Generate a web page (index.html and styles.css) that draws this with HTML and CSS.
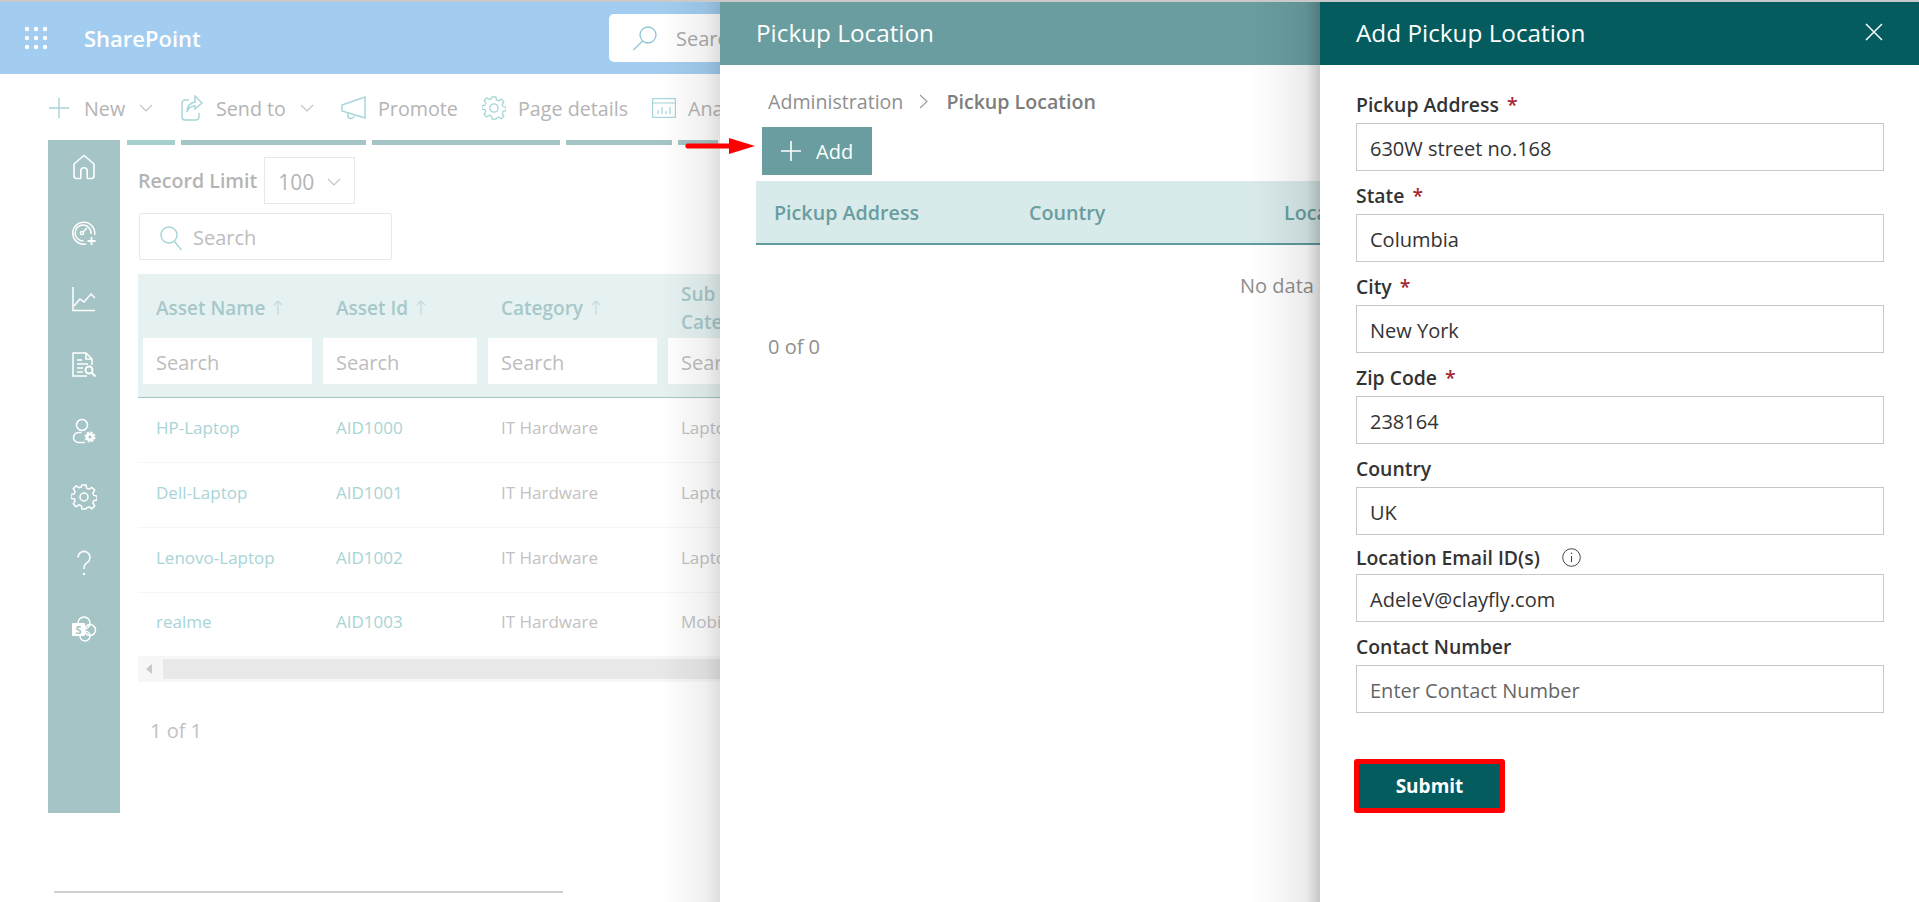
FILE: index.html
```html
<!DOCTYPE html>
<html lang="en">
<head>
  <meta charset="UTF-8">
  <title>Pickup Location</title>
  <link rel="stylesheet" href="styles.css">
</head>
<body>
  <div class="page">
    <header class="suite-bar">
      <svg class="waffle" width="24" height="24" viewBox="0 0 24 24"><g fill="#fff"><circle cx="3" cy="3" r="2.2"/><circle cx="12" cy="3" r="2.2"/><circle cx="21" cy="3" r="2.2"/><circle cx="3" cy="12" r="2.2"/><circle cx="12" cy="12" r="2.2"/><circle cx="21" cy="12" r="2.2"/><circle cx="3" cy="21" r="2.2"/><circle cx="12" cy="21" r="2.2"/><circle cx="21" cy="21" r="2.2"/></g></svg>
      <div class="brand">SharePoint</div>
      <div class="suite-search">
        <svg width="26" height="26" viewBox="0 0 26 26" fill="none" stroke="#8fc3d6" stroke-width="1.3"><circle cx="16" cy="10" r="8"/><path d="M10.5 16 1.5 25"/></svg>
        <span>Search</span>
      </div>
    </header>

    <div class="cmd-bar">
      <div class="cmd cmd-new">
        <svg width="20" height="20" viewBox="0 0 20 20" fill="none" stroke="#a5d5d8" stroke-width="1.4"><path d="M10 0v20M0 10h20"/></svg>
        <span>New</span>
        <svg class="chev" width="14" height="8" viewBox="0 0 14 8" fill="none" stroke="#c4c4c4" stroke-width="1.2"><path d="m1 1 6 6 6-6"/></svg>
      </div>
      <div class="cmd cmd-send">
        <svg width="22" height="26" viewBox="0 0 22 26" fill="none" stroke="#a5d5d8" stroke-width="1.4"><path d="M8 5H4a3 3 0 0 0-3 3v14a3 3 0 0 0 3 3h11a3 3 0 0 0 3-3v-4"/><path d="M14 1l7 7-7 6v-3c-4 0-7 2-8 6 0-6 3-9 8-10z"/></svg>
        <span>Send to</span>
        <svg class="chev" width="14" height="8" viewBox="0 0 14 8" fill="none" stroke="#c4c4c4" stroke-width="1.2"><path d="m1 1 6 6 6-6"/></svg>
      </div>
      <div class="cmd cmd-promote">
        <svg width="25" height="24" viewBox="0 0 25 24" fill="none" stroke="#a5d5d8" stroke-width="1.4"><path d="M24 1v21L1 15V9z"/><path d="M7 17v2a3 3 0 0 0 6 1"/></svg>
        <span>Promote</span>
      </div>
      <div class="cmd cmd-details">
        <svg width="24" height="24" viewBox="0 0 26 26" fill="none" stroke="#a5d5d8" stroke-width="1.4"><path d="M11 1h4l.7 3.300 2.300.9 2.900-1.800 2.800 2.800-1.800 2.900.9 2.300 3.200.6v4l-3.200.7-.9 2.300 1.800 2.900-2.800 2.800-2.900-1.800-2.300.9L15 25h-4l-.7-3.200-2.300-.9-2.900 1.800-2.800-2.800 1.800-2.900-.9-2.300L0 14.500v-4l3.200-.6.900-2.300-1.800-2.900 2.800-2.800L8 3.700l2.300-.9z"/><circle cx="13" cy="13" r="4.500"/></svg>
        <span>Page details</span>
      </div>
      <div class="cmd cmd-analytics">
        <svg width="24" height="20" viewBox="0 0 24 20" fill="none" stroke="#a5d5d8" stroke-width="1.2"><rect x=".6" y=".6" width="22.8" height="18.8"/><path d="M1 5h22M6 16v-4M10 16V9M14 16v-3M18 16V9"/></svg>
        <span>Analytics</span>
      </div>
    </div>

    <div class="app">
      <nav class="side-nav">
        <svg width="26" height="26" viewBox="0 0 26 26" fill="none" stroke="#fff" stroke-width="1.6"><path d="M13 1.500 3 10v12a2.500 2.500 0 0 0 2.500 2.500H9a.8.8 0 0 0 .8-.8V17a3.200 3.200 0 0 1 6.400 0v6.700a.8.8 0 0 0 .8.8h3.500A2.500 2.500 0 0 0 23 22V10z"/></svg>
        <svg width="26" height="26" viewBox="0 0 26 26" fill="none" stroke="#fff" stroke-width="1.5"><path d="M15 24a11 11 0 1 1 8.600-9"/><path d="M12.500 21a8 8 0 1 1 7.500-7"/><circle cx="11" cy="13" r="1.600"/><path d="m12 12 4-4"/><path d="M20.500 17v8M16.500 21h8" stroke-width="1.800"/></svg>
        <svg width="26" height="26" viewBox="0 0 26 26" fill="none" stroke="#fff" stroke-width="1.500"><path d="M2 1v23.500h22"/><path d="m3 20 6-7 4 3 7-8 4 4"/></svg>
        <svg width="26" height="26" viewBox="0 0 26 26" fill="none" stroke="#fff" stroke-width="1.500"><path d="M16 24H2V1h13l6 6v6"/><path d="M15 1v6h6M6 8h5M6 12h11M6 16h6M6 20h6"/><circle cx="18" cy="18" r="3.500" stroke-width="2"/><path d="m20.500 20.500 4 4" stroke-width="2"/></svg>
        <svg width="26" height="26" viewBox="0 0 26 26" fill="none" stroke="#fff" stroke-width="1.500"><circle cx="11" cy="7" r="5.500"/><path d="M14 24.500H7.500a5 5 0 0 1 0-10h3"/><circle cx="19" cy="19" r="4" fill="#fff" stroke="#fff" stroke-width="3" stroke-dasharray="2 1.100"/><circle cx="19" cy="19" r="1.500" fill="#a5c4c5" stroke="none"/></svg>
        <svg width="26" height="26" viewBox="0 0 26 26" fill="none" stroke="#fff" stroke-width="1.500"><path d="M11 1h4l.7 3.300 2.300.9 2.900-1.800 2.800 2.800-1.800 2.900.9 2.300 3.200.6v4l-3.200.7-.9 2.300 1.800 2.900-2.800 2.800-2.900-1.800-2.300.9L15 25h-4l-.7-3.200-2.300-.9-2.900 1.800-2.800-2.800 1.800-2.900-.9-2.300L0 14.500v-4l3.200-.6.900-2.300-1.800-2.900 2.800-2.800L8 3.700l2.300-.9z"/><circle cx="13" cy="13" r="4"/></svg>
        <svg width="26" height="26" viewBox="0 0 26 26" fill="none" stroke="#fff" stroke-width="1.500"><path d="M7 7.500a6 6 0 1 1 9.500 4.800C14 14 13 15 13 19"/><circle cx="13" cy="24" r="1.200" fill="#fff" stroke="none"/></svg>
        <svg width="26" height="26" viewBox="0 0 26 26" fill="none" stroke="#fff" stroke-width="1.500"><circle cx="13" cy="7" r="6"/><circle cx="19" cy="14" r="5.500"/><circle cx="14" cy="20" r="5"/><rect x="1" y="7" width="13" height="13" rx="1" fill="#fff" stroke="none"/><text x="7.500" y="18" class="sp-letter">S</text></svg>
      </nav>

      <main class="content">
        <div class="tabs">
          <i class="tab tab-a"></i><i class="tab tab-b"></i><i class="tab tab-c"></i><i class="tab tab-d"></i><i class="tab tab-e"></i>
        </div>
        <div class="record-limit">
          <span>Record Limit</span>
          <div class="limit-select">100
            <svg width="14" height="8" viewBox="0 0 14 8" fill="none" stroke="#c4c4c4" stroke-width="1.2"><path d="m1 1 6 6 6-6"/></svg>
          </div>
        </div>
        <div class="table-search">
          <svg width="22" height="26" viewBox="0 0 22 26" fill="none" stroke="#a5d5d8" stroke-width="1.4"><circle cx="9" cy="10" r="8"/><path d="m14.500 16.500 7 8.500"/></svg>
          <span>Search</span>
        </div>

        <table class="assets">
          <colgroup><col class="c1"><col class="c2"><col class="c3"><col class="c4"><col class="c5"></colgroup>
          <thead>
            <tr class="head-row">
              <th>Asset Name<svg class="sort" width="10" height="15" viewBox="0 0 10 15" fill="none" stroke="#c3d8d8" stroke-width="1.1"><path d="M5 15V1M1 5l4-4 4 4"/></svg></th>
              <th>Asset Id<svg class="sort" width="10" height="15" viewBox="0 0 10 15" fill="none" stroke="#c3d8d8" stroke-width="1.1"><path d="M5 15V1M1 5l4-4 4 4"/></svg></th>
              <th>Category<svg class="sort" width="10" height="15" viewBox="0 0 10 15" fill="none" stroke="#c3d8d8" stroke-width="1.1"><path d="M5 15V1M1 5l4-4 4 4"/></svg></th>
              <th>Sub<br>Category</th>
              <th></th>
            </tr>
            <tr class="filter-row">
              <th><div class="filter">Search</div></th>
              <th><div class="filter">Search</div></th>
              <th><div class="filter">Search</div></th>
              <th><div class="filter">Search</div></th>
              <th></th>
            </tr>
          </thead>
          <tbody>
            <tr><td class="link">HP-Laptop</td><td class="link">AID1000</td><td>IT Hardware</td><td>Laptop</td><td></td></tr>
            <tr><td class="link">Dell-Laptop</td><td class="link">AID1001</td><td>IT Hardware</td><td>Laptop</td><td></td></tr>
            <tr><td class="link">Lenovo-Laptop</td><td class="link">AID1002</td><td>IT Hardware</td><td>Laptop</td><td></td></tr>
            <tr><td class="link">realme</td><td class="link">AID1003</td><td>IT Hardware</td><td>Mobile</td><td></td></tr>
          </tbody>
        </table>

        <div class="h-scroll">
          <div class="scroll-btn"></div>
          <div class="scroll-thumb"></div>
        </div>
        <div class="pager">1 of 1</div>
      </main>
    </div>

    <div class="foot-line"></div>
  </div>

  <section class="panel panel-list">
    <div class="panel-head">Pickup Location</div>
    <div class="crumbs">
      <span>Administration</span>
      <svg width="9" height="15" viewBox="0 0 9 15" fill="none" stroke="#9a9a9a" stroke-width="1.1"><path d="m1 1 7 6.500L1 14"/></svg>
      <strong>Pickup Location</strong>
    </div>
    <button class="add-btn">
      <svg width="20" height="20" viewBox="0 0 20 20" fill="none" stroke="#fff" stroke-width="1.6"><path d="M10 0v20M0 10h20"/></svg>
      Add
    </button>
    <div class="list-head">
      <span class="lh-address">Pickup Address</span>
      <span class="lh-country">Country</span>
      <span>Location</span>
    </div>
    <div class="no-data">No data</div>
    <div class="list-count">0 of 0</div>
  </section>

  <svg class="arrow" width="70" height="16" viewBox="0 0 70 16"><path d="M2 5.500h42V0l26 8-26 8v-5.500H2a2.700 2.700 0 0 1 0-5z" fill="#f00"/></svg>

  <section class="panel panel-form">
    <div class="panel-head">
      Add Pickup Location
      <svg class="close" width="18" height="18" viewBox="0 0 18 18" fill="none" stroke="#fff" stroke-width="1.5"><path d="m1 1 16 16M17 1 1 17"/></svg>
    </div>
    <form class="form-body">
      <label>Pickup Address <em>*</em></label>
      <div class="input">630W street no.168</div>
      <label>State <em>*</em></label>
      <div class="input">Columbia</div>
      <label>City <em>*</em></label>
      <div class="input">New York</div>
      <label>Zip Code <em>*</em></label>
      <div class="input">238164</div>
      <label>Country</label>
      <div class="input">UK</div>
      <label class="label-tight">Location Email ID(s)
        <svg width="19" height="19" viewBox="0 0 19 19" fill="none" stroke="#444" stroke-width="1"><circle cx="9.500" cy="9.500" r="8.800"/><path d="M9.500 8v6"/><circle cx="9.500" cy="5.300" r=".8" fill="#444" stroke="none"/></svg>
      </label>
      <div class="input">AdeleV@clayfly.com</div>
      <label>Contact Number</label>
      <div class="input placeholder">Enter Contact Number</div>
      <button class="submit" type="button">Submit</button>
    </form>
  </section>
</body>
</html>
```

FILE: styles.css
```css
* {
  box-sizing: border-box;
}

html, body {
  margin: 0;
  padding: 0;
  height: 902px;
  overflow: hidden;
  background: #fff;
  font-family: "Open Sans", "Noto Sans", sans-serif;
}

svg {
  display: block;
  flex: none;
}

/* page behind the panels */
.page {
  border-top: 2px solid #c9c9c9;
  height: 902px;
  overflow: hidden;
}

.suite-bar {
  display: flex;
  align-items: center;
  height: 72px;
  background: #a3cdf0;
  padding-left: 24px;
}

.brand {
  margin-left: 36px;
  font-size: 22px;
  font-weight: 600;
  color: #fff;
  width: 525px;
}

.suite-search {
  display: flex;
  align-items: center;
  gap: 18px;
  width: 500px;
  height: 48px;
  padding-left: 23px;
  background: #fff;
  border-radius: 5px;
  font-size: 20px;
  color: #aaa;
}

.cmd-bar {
  display: flex;
  align-items: center;
  height: 66px;
  padding: 2px 0 0 49px;
  font-size: 19.7px;
  color: #b4b4b4;
}

.cmd {
  display: flex;
  align-items: center;
}

.cmd-new { width: 132px; }
.cmd-new span { margin-left: 15px; margin-right: 14px; }
.cmd-send { width: 160px; }
.cmd-send span { margin-left: 13px; margin-right: 14px; }
.cmd-promote { width: 141px; }
.cmd-promote span { margin-left: 12px; }
.cmd-details { width: 170px; }
.cmd-details span { margin-left: 12px; }
.cmd-analytics span { margin-left: 12px; }

.app {
  display: flex;
  height: 673px;
}

.side-nav {
  display: flex;
  flex-direction: column;
  align-items: center;
  gap: 40px;
  width: 72px;
  margin-left: 48px;
  padding-top: 14px;
  background: #a5c4c5;
}

.sp-letter {
  font-size: 11px;
  font-weight: 700;
  fill: #a5c4c5;
  stroke: none;
  text-anchor: middle;
}

.content {
  flex: 1;
  padding-left: 18px;
}

.tabs {
  display: flex;
  gap: 6px;
  margin-left: -11px;
}

.tab {
  display: block;
  height: 5px;
  background: #a5c4c5;
}

.tab-a { width: 48px; background: #a5d0cd; }
.tab-b { width: 185px; }
.tab-c { width: 188px; }
.tab-d { width: 106px; }
.tab-e { width: 40px; }

.record-limit {
  display: flex;
  align-items: center;
  gap: 7px;
  height: 47px;
  margin-top: 12px;
  font-size: 19.6px;
  font-weight: 600;
  color: #b4b4b4;
}

.limit-select {
  display: flex;
  align-items: center;
  justify-content: space-between;
  width: 91px;
  height: 47px;
  padding: 2px 13px 0;
  border: 1px solid #e8e8e8;
  font-weight: 400;
  font-size: 21px;
}

.table-search {
  display: flex;
  align-items: center;
  gap: 11px;
  width: 253px;
  height: 47px;
  margin: 9px 0 14px 1px;
  padding: 2px 0 0 20px;
  border: 1px solid #e8e8e8;
  border-radius: 2px;
  font-size: 20px;
  color: #bdbdbd;
}

.assets {
  width: 1200px;
  border-collapse: collapse;
  table-layout: fixed;
}

.c1 { width: 180px; }
.c2 { width: 165px; }
.c3 { width: 180px; }
.c4 { width: 180px; }

.assets th {
  background: #e6f2f2;
  text-align: left;
  font-size: 19px;
  font-weight: 600;
  color: #a7c8c9;
}

.sort {
  display: inline-block;
  margin-left: 8px;
}

.head-row th {
  height: 64px;
  padding: 3px 0 0 18px;
  line-height: 28px;
}

.filter-row th {
  height: 59px;
  padding: 0 6px 13px 5px;
  vertical-align: top;
  border-bottom: 1px solid #a5c4c5;
}

.filter {
  display: flex;
  align-items: center;
  height: 46px;
  padding: 2px 0 0 13px;
  background: #fff;
  font-size: 20px;
  font-weight: 400;
  color: #bdbdbd;
}

.assets td {
  height: 65px;
  padding: 0 0 6px 18px;
  font-size: 17px;
  color: #c2c2c2;
  border-bottom: 1px solid #f6f6f6;
}

.assets tbody tr:last-child td {
  border-bottom: none;
  height: 63px;
}

.assets td.link {
  color: #a9d4d6;
}

.h-scroll {
  display: flex;
  height: 26px;
  padding: 3px 0;
  background: #f7f7f7;
}

.scroll-btn {
  position: relative;
  width: 25px;
}

.scroll-btn::after {
  content: "";
  position: absolute;
  left: 8px;
  top: 5px;
  border: 5px solid transparent;
  border-right: 6px solid #c9c9c9;
  border-left: none;
}

.scroll-thumb {
  flex: 1;
  background: #e8e8e8;
}

.pager {
  margin: 35px 0 0 12px;
  font-size: 20px;
  color: #c2c2c2;
}

.foot-line {
  height: 0;
  width: 509px;
  margin: 78px 0 0 54px;
  border-top: 2px solid #cfcfcf;
}

/* side panels */
.panel {
  position: absolute;
  top: 2px;
  height: 900px;
  background: #fff;
}

.panel::before {
  content: "";
  position: absolute;
  top: 0;
  bottom: 0;
  left: -60px;
  width: 60px;
}

.panel-list::before {
  background: linear-gradient(to right, rgba(0, 0, 0, 0), rgba(0, 0, 0, 0.03) 40%, rgba(0, 0, 0, 0.06) 75%, rgba(0, 0, 0, 0.13));
}

.panel-form::before {
  left: -70px;
  width: 70px;
  background: linear-gradient(to right, rgba(0, 0, 0, 0), rgba(0, 0, 0, 0.03) 40%, rgba(0, 0, 0, 0.08) 80%, rgba(0, 0, 0, 0.22));
}

.panel-head {
  display: flex;
  align-items: center;
  justify-content: space-between;
  height: 63px;
  padding-bottom: 3px;
  font-size: 24.3px;
  color: #fff;
}

.panel-list .panel-head {
  padding-left: 36px;
  background: #699da0;
}

.panel-list {
  left: 720px;
  width: 600px;
}

.crumbs {
  display: flex;
  align-items: center;
  gap: 16px;
  height: 62px;
  padding: 10px 0 0 48px;
  font-size: 19.6px;
  color: #8f8f8f;
}

.crumbs strong {
  font-weight: 600;
  color: #7d7d7d;
  margin-left: 2px;
}

.add-btn {
  display: flex;
  align-items: center;
  gap: 15px;
  width: 110px;
  height: 48px;
  margin-left: 42px;
  padding: 0 0 0 19px;
  border: none;
  background: #699da0;
  color: #fff;
  font-family: inherit;
  font-size: 20px;
}

.list-head {
  display: flex;
  align-items: center;
  width: 564px;
  height: 64px;
  margin: 6px 0 0 36px;
  padding: 1px 0 0 18px;
  background: #d9eaea;
  border-bottom: 2px solid #5f9a9c;
  font-size: 19.7px;
  font-weight: 600;
  color: #699da0;
  white-space: nowrap;
  overflow: hidden;
}

.lh-address { width: 255px; flex: none; }
.lh-country { width: 255px; flex: none; }

.no-data {
  margin: 27px 0 0 520px;
  font-size: 20px;
  color: #8f8f8f;
  line-height: 28px;
}

.list-count {
  margin: 33px 0 0 48px;
  font-size: 20px;
  color: #8f8f8f;
  line-height: 28px;
}

.panel-form {
  left: 1320px;
  width: 599px;
}

.panel-form .panel-head {
  padding: 0 36px 3px;
  background: #045c5f;
}

.form-body {
  display: flex;
  flex-direction: column;
  padding: 15px 35px 0 36px;
}

.form-body label {
  display: flex;
  align-items: center;
  gap: 8px;
  height: 43px;
  padding: 12px 0 7px;
  font-size: 19.4px;
  font-weight: 600;
  color: #333;
}

.form-body label.label-tight {
  height: 39px;
  padding: 10px 0 5px;
}

.form-body label svg {
  margin-left: 14px;
}

.form-body em {
  font-style: normal;
  color: #a4262c;
}

.input {
  display: flex;
  align-items: center;
  height: 48px;
  padding: 2px 0 0 13px;
  border: 1px solid #c8c8c8;
  font-size: 20px;
  color: #333;
}

.input.placeholder {
  color: #666;
}

.submit {
  width: 151px;
  height: 54px;
  margin: 46px 0 0 -2px;
  background: #045c5f;
  border: 5px solid #f00;
  border-radius: 3px;
  color: #fff;
  font-family: inherit;
  font-size: 19px;
  font-weight: 700;
}

.arrow {
  position: absolute;
  left: 685px;
  top: 138px;
}
```
